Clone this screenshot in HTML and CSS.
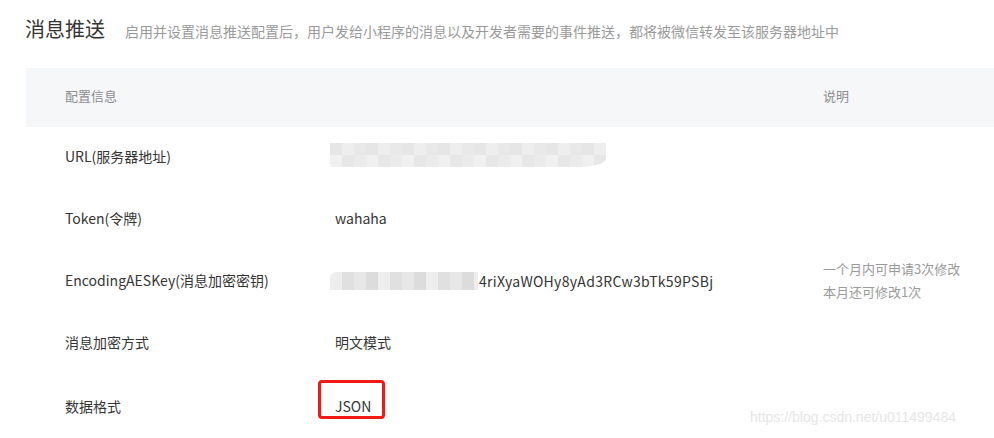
FILE: index.html
```html
<!DOCTYPE html>
<html lang="zh-CN">
<head>
    <meta charset="UTF-8">
    <title>消息推送</title>
    <link rel="stylesheet" href="styles.css">
</head>
<body>
    <div class="page">
        <div class="title-bar">
            <h2 class="title">消息推送</h2>
            <span class="tips">启用并设置消息推送配置后，用户发给小程序的消息以及开发者需要的事件推送，都将被微信转发至该服务器地址中</span>
        </div>

        <table class="config">
            <thead>
                <tr>
                    <th class="col-name">配置信息</th>
                    <th class="col-value"></th>
                    <th class="col-desc">说明</th>
                </tr>
            </thead>
            <tbody>
                <tr>
                    <td class="col-name">URL(服务器地址)</td>
                    <td class="col-value"><span class="mosaic mosaic-url"></span></td>
                    <td class="col-desc"></td>
                </tr>
                <tr>
                    <td class="col-name">Token(令牌)</td>
                    <td class="col-value">wahaha</td>
                    <td class="col-desc"></td>
                </tr>
                <tr>
                    <td class="col-name">EncodingAESKey(消息加密密钥)</td>
                    <td class="col-value"><span class="mosaic mosaic-key"></span><span class="key-tail">4riXyaWOHy8yAd3RCw3bTk59PSBj</span></td>
                    <td class="col-desc">一个月内可申请3次修改<br>本月还可修改1次</td>
                </tr>
                <tr>
                    <td class="col-name">消息加密方式</td>
                    <td class="col-value">明文模式</td>
                    <td class="col-desc"></td>
                </tr>
                <tr>
                    <td class="col-name">数据格式</td>
                    <td class="col-value cell-top"><span class="mark">JSON</span></td>
                    <td class="col-desc"></td>
                </tr>
            </tbody>
        </table>
    </div>
    <div class="watermark">https://blog.csdn.net/u011499484</div>
</body>
</html>
```

FILE: styles.css
```css
body {
    margin: 0;
    background: #fff;
    font-family: "Noto Sans CJK SC", "Noto Sans", sans-serif;
    color: #353535;
    overflow: hidden;
}

.page {
    padding-left: 26px;
}

.title-bar {
    display: flex;
    align-items: baseline;
    height: 68px;
    padding-top: 15px;
    box-sizing: border-box;
}

.title {
    margin: 0 0 0 -1px;
    font-size: 20px;
    font-weight: normal;
    line-height: 28px;
    color: #353535;
}

.tips {
    margin-left: 20px;
    font-size: 14px;
    color: #9a9a9a;
}

.config {
    width: 100%;
    border-collapse: collapse;
    font-size: 14px;
}

.config th {
    height: 55px;
    padding: 0 0 4px 0;
    background: #f6f7f9;
    font-weight: normal;
    text-align: left;
    color: #8d8d8d;
    font-size: 13px;
}

.config td {
    height: 57px;
    padding: 0 0 5px 0;
    vertical-align: middle;
}

.col-name {
    width: 270px;
    padding-left: 39px !important;
}

.col-value {
    width: 488px;
}

.col-desc {
    color: #9a9a9a;
    font-size: 13px;
    line-height: 23px;
}

.mosaic {
    display: inline-block;
    vertical-align: middle;
    margin-left: -5px;
}

.mosaic-url {
    width: 276px;
    height: 24px;
    margin-top: -2px;
    background:
        repeating-linear-gradient(90deg, #e6e6e6 0 12px, #eeeeee 12px 24px, #e9e9e9 24px 36px) top / 100% 12px no-repeat,
        repeating-linear-gradient(90deg, #f0f0f0 0 12px, #e7e7e7 12px 24px, #ebebeb 24px 36px) bottom / 100% 12px no-repeat;
    border-radius: 0 0 30px 4px / 0 0 8px 4px;
}

.mosaic-key {
    width: 148px;
    height: 18px;
    background: repeating-linear-gradient(90deg, #eeeeee 0 12px, #e0e0e0 12px 24px, #e7e7e7 24px 36px, #dcdcdc 36px 48px);
    border-radius: 6px 0 0 0;
}

.key-tail {
    margin-left: 1px;
    vertical-align: middle;
    letter-spacing: 0.3px;
}

.config td.cell-top {
    vertical-align: top;
    padding-top: 5px;
}

.mark {
    display: inline-block;
    margin-left: -17px;
    padding: 13px 11px 0 14px;
    height: 20px;
    line-height: 20px;
    border: 3px solid #f21b14;
    border-radius: 4px;
    color: #353535;
}

.watermark {
    position: absolute;
    left: 750px;
    top: 409px;
    font-family: "Liberation Sans", Arial, sans-serif;
    font-size: 14px;
    color: #e6e6e6;
}
```
